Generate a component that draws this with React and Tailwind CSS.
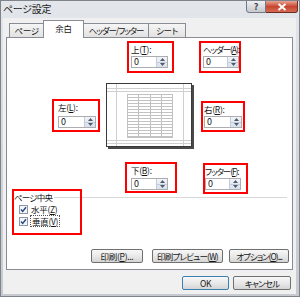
import React from "react";

function Up() {
  return (
    <svg width="5" height="3" viewBox="0 0 5 3">
      <path d="M0 3 L2.5 0 L5 3Z" fill="#4d5b6e" />
    </svg>
  );
}
function Down() {
  return (
    <svg width="5" height="3" viewBox="0 0 5 3">
      <path d="M0 0 L2.5 3 L5 0Z" fill="#4d5b6e" />
    </svg>
  );
}

function SpinInput({ w }) {
  return (
    <div className={`${w} h-[12px] border border-[#abadb3] bg-white flex`}>
      <div className="flex-1 pl-[2px] leading-[10px] text-[9px]">0</div>
      <div className="w-[11px] h-full flex flex-col bg-linear-to-b from-[#f1f4f8] to-[#d9e1eb] border-l border-[#c3ccd8]">
        <div className="flex-1 flex items-center justify-center border-b border-[#c3ccd8]">
          <Up />
        </div>
        <div className="flex-1 flex items-center justify-center">
          <Down />
        </div>
      </div>
    </div>
  );
}

function Field({ label, acc, box, pad, gap, inputW, track = "" }) {
  return (
    <div className={`border-2 border-[#f00] flex flex-col ${box}`}>
      <div className={`h-[12px] leading-[12px] whitespace-nowrap ${pad} ${track}`}>
        {label}(<span className="underline">{acc}</span>):
      </div>
      <div className={`${pad} ${gap}`}>
        <SpinInput w={inputW} />
      </div>
    </div>
  );
}

function Check() {
  return (
    <svg width="9" height="9" viewBox="0 0 9 9">
      <rect x="0.5" y="0.5" width="8" height="8" fill="#f3f6fa" stroke="#8c97a6" />
      <path d="M2 4.6 L3.7 6.4 L7 2.3" stroke="#24467a" strokeWidth="1.4" fill="none" />
    </svg>
  );
}

function Btn({ children, w, def, track = "" }) {
  return (
    <div
      className={`h-[14px] ${w} rounded-[2px] border ${
        def ? "border-[#3c7fb1]" : "border-[#707070]"
      } bg-linear-to-b from-[#f7f7f7] via-[#e9e9e9] to-[#d5d5d5] flex items-center justify-center leading-none whitespace-nowrap ${track}`}
    >
      {children}
    </div>
  );
}

function Preview() {
  const rows = [];
  for (let y = 14; y < 55; y += 3) rows.push(y);
  return (
    <svg width="88" height="66" viewBox="0 0 88 66">
      <rect x="0.5" y="0.5" width="85" height="63" fill="#fff" stroke="#3a3a3a" />
      <rect x="86" y="2" width="2" height="64" fill="#4a4a4a" />
      <rect x="2" y="64" width="86" height="2" fill="#4a4a4a" />
      <g stroke="#cfcfcf" strokeWidth="1">
        <line x1="10.5" y1="1" x2="10.5" y2="63" />
        <line x1="77.5" y1="1" x2="77.5" y2="63" />
        <line x1="1" y1="5.5" x2="85" y2="5.5" />
        <line x1="1" y1="8.5" x2="85" y2="8.5" />
        <line x1="1" y1="57.5" x2="85" y2="57.5" />
        <line x1="1" y1="60.5" x2="85" y2="60.5" />
      </g>
      <g stroke="#c2c2c2" strokeWidth="1" fill="none">
        <rect x="21.5" y="11.5" width="45" height="43" />
        <line x1="32.5" y1="11" x2="32.5" y2="55" />
        <line x1="44.5" y1="11" x2="44.5" y2="55" />
        <line x1="55.5" y1="11" x2="55.5" y2="55" />
        {rows.map((y) => (
          <line key={y} x1="21" y1={y + 0.5} x2="67" y2={y + 0.5} />
        ))}
      </g>
    </svg>
  );
}

export default function App() {
  return (
    <div className="w-[300px] h-[297px] overflow-hidden border border-[#7f848b] bg-linear-to-b from-[#e3e6ea] via-[#d4d8dd] to-[#c6cad0] flex flex-col font-['Noto_Sans_CJK_JP','Noto_Sans',sans-serif] text-[8.5px] tracking-[-0.3px] text-[#151515] [font-feature-settings:'palt']">
      {/* title bar */}
      <div className="h-[17px] flex items-start pl-[2px] shrink-0">
        <div className="pt-[2px] text-[10px] leading-[12px] text-[#1a1a1a]">ページ設定</div>
        <div className="ml-auto mr-[1px] flex -mt-px">
          <div className="w-[20px] h-[13px] rounded-bl-[3px] border border-[#747982] bg-linear-to-b from-[#eef0f3] to-[#c5c9cf] flex items-center justify-center text-[9px] font-bold text-[#444] leading-none">
            ?
          </div>
          <div className="w-[32px] h-[13px] rounded-br-[3px] border border-l-0 border-[#6e2b22] bg-linear-to-b from-[#e6a496] via-[#c8452f] to-[#d46a55] flex items-center justify-center">
            <svg width="10" height="8" viewBox="0 0 10 8">
              <path d="M1.5 1 L8.5 7 M8.5 1 L1.5 7" stroke="#fff" strokeWidth="2" />
            </svg>
          </div>
        </div>
      </div>

      {/* client */}
      <div className="ml-[2px] mr-[3px] mb-[2px] flex-1 bg-[#f0f0f0] flex flex-col">
        {/* tabs */}
        <div className="mt-[2px] pl-[6px] h-[17px] flex items-end">
          <div className="w-[35px] h-[14px] border border-b-0 border-[#898c95] bg-linear-to-b from-[#f5f5f5] to-[#e2e2e2] flex items-center justify-center leading-none">
            ページ
          </div>
          <div className="relative z-10 -ml-px -mb-px w-[41px] h-[18px] border border-b-0 border-[#898c95] bg-white flex items-center justify-center leading-none pb-[2px]">
            余白
          </div>
          <div className="-ml-px w-[66px] h-[14px] border border-b-0 border-[#898c95] bg-linear-to-b from-[#f5f5f5] to-[#e2e2e2] flex items-center justify-center leading-none whitespace-nowrap tracking-[-1.1px]">
            ヘッダー/フッター
          </div>
          <div className="-ml-px w-[38px] h-[14px] border border-b-0 border-[#898c95] bg-linear-to-b from-[#f5f5f5] to-[#e2e2e2] flex items-center justify-center leading-none">
            シート
          </div>
        </div>

        {/* panel */}
        <div className="ml-[3px] w-[287px] h-[233px] border border-[#898c95] bg-white flex flex-col">
          {/* row A */}
          <div className="flex mt-[3px] pl-[120px] gap-[25px]">
            <Field label="上" acc="T" box="w-[47px] h-[32px]" pad="pl-[2px]" gap="mt-px" inputW="w-[37px]" />
            <Field label="ヘッダー" acc="A" box="w-[42px] h-[32px]" pad="pl-[2px]" gap="mt-px" inputW="w-[36px]" track="tracking-[-1.1px]" />
          </div>
          {/* row B */}
          <div className="flex items-start mt-[10px] pl-[45px]">
            <div className="mt-[16px]">
              <Field label="左" acc="L" box="w-[48px] h-[33px]" pad="pl-[4px]" gap="mt-[3px]" inputW="w-[38px]" />
            </div>
            <div className="ml-[6px] w-[88px] h-[66px]">
              <Preview />
            </div>
            <div className="ml-[7px] mt-[18px]">
              <Field label="右" acc="R" box="w-[44px] h-[31px]" pad="pl-[1px]" gap="mt-px" inputW="w-[38px]" />
            </div>
          </div>
          {/* row C */}
          <div className="flex items-start mt-[13px] pl-[118px]">
            <Field label="下" acc="B" box="w-[52px] h-[31px]" pad="pl-[4px]" gap="mt-[2px]" inputW="w-[37px]" />
            <div className="ml-[26px] mt-px">
              <Field label="フッター" acc="F" box="w-[45px] h-[31px]" pad="pl-0" gap="mt-px" inputW="w-[36px]" track="tracking-[-1.1px]" />
            </div>
          </div>
          {/* group */}
          <div className="flex items-start -mt-[5px]">
            <div className="ml-[5px] w-[70px] h-[46px] border-2 border-[#f00] flex flex-col">
              <div className="h-[12px] flex items-center">
                <span className="leading-[12px] whitespace-nowrap tracking-[-0.8px]">ページ中央</span>
                <div className="flex-1 h-px bg-[#d8d8d8] ml-[2px]" />
              </div>
              <div className="pl-[5px] h-[12px] flex items-center gap-[3px]">
                <Check />
                <span className="leading-[12px] whitespace-nowrap">
                  水平(<span className="underline">Z</span>)
                </span>
              </div>
              <div className="pl-[5px] h-[12px] flex items-center gap-[2px]">
                <Check />
                <span className="leading-[10px] whitespace-nowrap border border-dotted border-[#555] px-px">
                  垂直(<span className="underline">V</span>)
                </span>
              </div>
            </div>
            <div className="flex-1 h-px bg-[#d8d8d8] mt-[8px] mr-[5px]" />
          </div>
          {/* panel buttons */}
          <div className="flex mt-[14px] pl-[84px]">
            <Btn w="w-[52px]">
              印刷(<span className="underline">P</span>)...
            </Btn>
            <div className="ml-[9px]">
              <Btn w="w-[71px]" track="tracking-[-0.8px]">
                印刷プレビュー(<span className="underline">W</span>)
              </Btn>
            </div>
            <div className="ml-[6px]">
              <Btn w="w-[60px]" track="tracking-[-1px]">
                オプション(<span className="underline">O</span>)...
              </Btn>
            </div>
          </div>
        </div>

        {/* dialog buttons */}
        <div className="flex mt-[6px] pl-[179px] gap-[4px]">
          <Btn w="w-[47px]" def>
            OK
          </Btn>
          <Btn w="w-[58px]" track="tracking-[-0.8px]">キャンセル</Btn>
        </div>
      </div>
    </div>
  );
}
